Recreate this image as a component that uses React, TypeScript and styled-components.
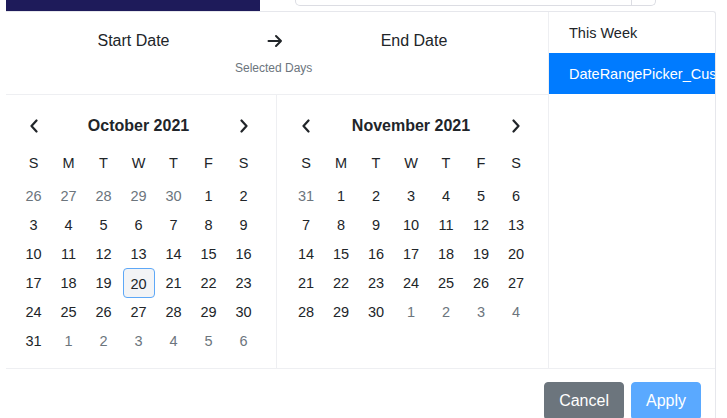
import React from "react";
import styled, { createGlobalStyle } from "styled-components";

const Global = createGlobalStyle`
  html, body { margin: 0; padding: 0; background: #fff; overflow: hidden; }
  body { font-family: "Liberation Sans", Arial, sans-serif; color: #212529; }
  * { box-sizing: border-box; }
`;

const Page = styled.div`
  width: 727px;
  height: 418px;
  overflow: hidden;
`;

const TopStrip = styled.div`
  display: flex;
  height: 11px;
  padding-left: 6px;
`;

const NavyBar = styled.div`
  width: 254px;
  height: 11px;
  background: #1e1b5a;
`;

const InputStub = styled.div`
  margin-left: 35px;
  width: 361px;
  height: 6px;
  border: 1px solid #dcdde3;
  border-top: none;
  border-radius: 0 0 5px 5px;
  display: flex;
  justify-content: flex-end;
`;

const InputAddon = styled.div`
  width: 24px;
  border-left: 1px solid #dcdde3;
`;

const Popup = styled.div`
  margin-left: 6px;
  width: 710px;
  border-top: 1px solid #e6e7ec;
  border-right: 1px solid #e6e7ec;
  border-top-right-radius: 3px;
  background: #fff;
`;

const Main = styled.div`
  display: flex;
`;

const Left = styled.div`
  width: 542px;
  display: flex;
  flex-direction: column;
`;

const Header = styled.div`
  height: 83px;
  border-bottom: 1px solid #eeeff2;
  padding-top: 19px;
  display: grid;
  grid-template-columns: 255px 28px 250px;
  grid-template-rows: 20px 14px;
  row-gap: 10px;
  align-items: center;
`;

const HeaderTitle = styled.div`
  font-size: 16px;
  text-align: center;
  color: #212529;
`;

const ArrowCell = styled.div`
  display: flex;
  justify-content: center;
  align-items: center;
  margin-top: -1px;
`;

const SubTitle = styled.div`
  grid-column: 1 / 4;
  justify-self: start;
  margin-left: 229px;
  font-size: 12px;
  color: #6c757d;
`;

const Calendars = styled.div`
  display: flex;
  height: 273px;
`;

const CalendarPanel = styled.div<{ $pad: number; $divider?: boolean }>`
  flex: 1;
  padding: 16px 0 0 ${(p) => p.$pad}px;
  border-right: ${(p) => (p.$divider ? "1px solid #eeeff2" : "none")};
`;

const MonthHeader = styled.div`
  width: 245px;
  height: 30px;
  display: grid;
  grid-template-columns: 35px 1fr 35px;
  align-items: center;
`;

const NavButton = styled.div`
  display: flex;
  justify-content: center;
  align-items: center;
`;

const MonthTitle = styled.div`
  text-align: center;
  font-weight: 700;
  font-size: 16px;
  color: #212529;
`;

const Grid = styled.div<{ $mt: number }>`
  width: 245px;
  margin-top: ${(p) => p.$mt}px;
  display: grid;
  grid-template-columns: repeat(7, 35px);
  grid-auto-rows: 29px;
`;

const WeekDay = styled.div`
  display: flex;
  justify-content: center;
  align-items: center;
  font-size: 14.5px;
  color: #212529;
`;

const DayCell = styled.div`
  display: flex;
  justify-content: center;
  align-items: center;
`;

const Day = styled.div<{ $muted?: boolean; $today?: boolean }>`
  width: 32px;
  height: 30px;
  flex-shrink: 0;
  display: flex;
  justify-content: center;
  align-items: center;
  font-size: 14.5px;
  border-radius: 4px;
  color: ${(p) => (p.$muted ? "#6c757d" : "#212529")};
  border: 1px solid ${(p) => (p.$today ? "#5ea8f7" : "transparent")};
  background: ${(p) => (p.$today ? "#f3f4f6" : "transparent")};
  padding-top: ${(p) => (p.$today ? "2px" : "0")};
`;

const Sidebar = styled.div`
  width: 167px;
  border-left: 1px solid #eeeff2;
  overflow: hidden;
`;

const PresetItem = styled.div<{ $active?: boolean }>`
  height: 41px;
  padding-left: 20px;
  display: flex;
  align-items: center;
  white-space: nowrap;
  font-size: 14.5px;
  color: ${(p) => (p.$active ? "#ffffff" : "#212529")};
  background: ${(p) => (p.$active ? "#007bff" : "transparent")};
`;

const Footer = styled.div`
  border-top: 1px solid #eeeff2;
  display: flex;
  justify-content: flex-end;
  gap: 7px;
  padding: 13px 14px 0 0;
`;

const Button = styled.button<{ $variant: "secondary" | "primary" }>`
  height: 38px;
  padding: 0 14px 1px;
  font-family: "Liberation Sans", Arial, sans-serif;
  font-size: 16px;
  color: #fff;
  border-radius: 4px;
  border: 1px solid ${(p) => (p.$variant === "secondary" ? "#6c757d" : "#5aa9ff")};
  background: ${(p) => (p.$variant === "secondary" ? "#6c757d" : "#5aa9ff")};
  cursor: pointer;
`;

const ChevronLeft = () => (
  <svg width="10" height="14" viewBox="0 0 10 14">
    <path d="M7.5 1.5 L2.5 7 L7.5 12.5" fill="none" stroke="#212529" strokeWidth="2.2" strokeLinecap="round" strokeLinejoin="round" />
  </svg>
);

const ChevronRight = () => (
  <svg width="10" height="14" viewBox="0 0 10 14">
    <path d="M2.5 1.5 L7.5 7 L2.5 12.5" fill="none" stroke="#212529" strokeWidth="2.2" strokeLinecap="round" strokeLinejoin="round" />
  </svg>
);

const Arrow = () => (
  <svg width="16" height="14" viewBox="0 0 16 14">
    <path d="M1.5 7 H14 M9 2 L14 7 L9 12" fill="none" stroke="#212529" strokeWidth="2" strokeLinecap="round" strokeLinejoin="round" />
  </svg>
);

type D = { n: number; muted?: boolean; today?: boolean };

const range = (a: number, b: number, muted = false): D[] => {
  const out: D[] = [];
  for (let i = a; i <= b; i++) out.push({ n: i, muted });
  return out;
};

const october: D[] = [
  ...range(26, 30, true),
  ...range(1, 31).map((d) => (d.n === 20 ? { ...d, today: true } : d)),
  ...range(1, 6, true),
];

const november: D[] = [...range(31, 31, true), ...range(1, 30), ...range(1, 4, true)];

const weekdays = ["S", "M", "T", "W", "T", "F", "S"];

const Calendar: React.FC<{ title: string; days: D[]; pad: number; divider?: boolean }> = ({ title, days, pad, divider }) => (
  <CalendarPanel $pad={pad} $divider={divider}>
    <MonthHeader>
      <NavButton><ChevronLeft /></NavButton>
      <MonthTitle>{title}</MonthTitle>
      <NavButton><ChevronRight /></NavButton>
    </MonthHeader>
    <Grid $mt={7}>
      {weekdays.map((w, i) => (
        <WeekDay key={i}>{w}</WeekDay>
      ))}
    </Grid>
    <Grid $mt={4}>
      {days.map((d, i) => (
        <DayCell key={i}>
          <Day $muted={d.muted} $today={d.today}>{d.n}</Day>
        </DayCell>
      ))}
    </Grid>
  </CalendarPanel>
);

export default function App() {
  return (
    <Page>
      <Global />
      <TopStrip>
        <NavyBar />
        <InputStub>
          <InputAddon />
        </InputStub>
      </TopStrip>
      <Popup>
        <Main>
          <Left>
            <Header>
              <HeaderTitle>Start Date</HeaderTitle>
              <ArrowCell><Arrow /></ArrowCell>
              <HeaderTitle>End Date</HeaderTitle>
              <SubTitle>Selected Days</SubTitle>
            </Header>
            <Calendars>
              <Calendar title="October 2021" days={october} pad={10} divider />
              <Calendar title="November 2021" days={november} pad={12} />
            </Calendars>
          </Left>
          <Sidebar>
            <PresetItem>This Week</PresetItem>
            <PresetItem $active>DateRangePicker_CustomRange</PresetItem>
          </Sidebar>
        </Main>
        <Footer>
          <Button $variant="secondary">Cancel</Button>
          <Button $variant="primary">Apply</Button>
        </Footer>
      </Popup>
    </Page>
  );
}
